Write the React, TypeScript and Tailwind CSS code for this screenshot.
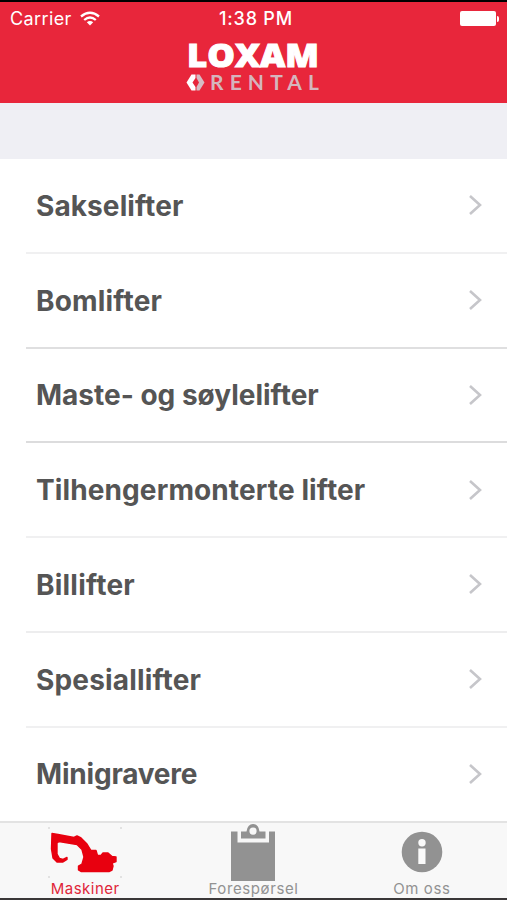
import React, { useState } from "react";

const machines = [
  { name: "Sakselifter", text: "tracking-[0.09px]", line: "border-[#f0f0f1]" },
  { name: "Bomlifter", text: "tracking-[0.18px]", line: "border-[#dfdfe0]" },
  { name: "Maste- og søylelifter", text: "tracking-[0px]", line: "border-[#dcdcdd]" },
  { name: "Tilhengermonterte lifter", text: "tracking-[0.11px]", line: "border-[#f0f0f1]" },
  { name: "Billifter", text: "tracking-[0.22px]", line: "border-[#ededee]" },
  { name: "Spesiallifter", text: "tracking-[0.16px]", line: "border-[#f0f0f1]" },
  { name: "Minigravere", text: "tracking-[-0.2px]", line: "border-transparent" },
];

function Logo() {
  return (
    <svg width="140" height="60" viewBox="0 0 140 60" className="block overflow-visible">
      <text
        x="3"
        y="31"
        textLength="132"
        lengthAdjust="spacingAndGlyphs"
        fill="#fff"
        stroke="#fff"
        strokeWidth="1"
        className="font-['Open_Sans',sans-serif] text-[31px] leading-none font-extrabold"
      >
        LOXAM
      </text>
      <path d="M7.500 38.500 H11.500 V42 L8.500 46.500 L11.500 51 V54.500 H7.500 L2.500 46.500 Z" fill="#fff" />
      <path d="M12.500 38.500 H15.500 L20.500 46.500 L15.500 54.500 H12.500 V51 L15 46.500 L12.500 42 Z" fill="#d6bcc3" />
      <text
        x="26"
        y="54"
        textLength="109"
        fill="#d5b5bd"
        className="font-['Lato',sans-serif] text-[21px] leading-none font-bold"
      >
        RENTAL
      </text>
    </svg>
  );
}

function WifiIcon() {
  return (
    <svg width="20" height="16" viewBox="0 0 20 16" fill="none" stroke="#fff" strokeWidth="2.300">
      <path d="M1 5.500 Q10 -2 19 5.500" />
      <path d="M4.200 9 Q10 4 15.800 9" />
      <path d="M6.800 11.300 Q10 8.600 13.200 11.300 L10 14.500 Z" fill="#fff" stroke="none" />
    </svg>
  );
}

function ExcavatorIcon() {
  return (
    <svg width="78" height="52" viewBox="0 0 78 52" className="block">
      <path
        fill="#e8000f"
        stroke="#e8000f"
        strokeWidth="1.400"
        strokeLinejoin="round"
        d="M6 6.500 L12 7.500 L28 10.500 L31 9 L35 11 L41 17 L45 23.500 L50 23.500 L51.500 28.500 L55 28.500 L57 26 L62 26 L66 29.500 L70 30 L70 34.500 L66 36 L67 39 L66 43 L63 44.500 L35 44.500 L32.500 43 L32.500 39 L36 37 L38 30 L36 22.500 L31 17.500 L13 14.500 L11 16 L11 27 L13.500 31.500 L17 32.500 L21 30.500 L21 32.500 L17 35 L11 35 L7 31 L5.500 22 Z"
      />
      <path d="M2 1h2M76 1h-2M2 50h2M76 50h-2" stroke="#ccc" strokeWidth="1" />
    </svg>
  );
}

function ClipboardIcon() {
  return (
    <svg width="46" height="57" viewBox="0 0 46 57" className="block">
      <path d="M1 7.500 H45 V57 H1 Z" fill="#929292" />
      <path d="M7.500 6 H39 V18.500 H7.500 Z" fill="#f7f7f7" />
      <path
        fillRule="evenodd"
        fill="#929292"
        d="M11 7.500 H16.500 Q17.500 0 23 0 Q28.500 0 29.500 7.500 H35.500 V14.500 H11 Z M23 3.500 A3.600 3.600 0 1 0 23 10.700 A3.600 3.600 0 1 0 23 3.500 Z"
      />
    </svg>
  );
}

function InfoIcon() {
  return (
    <svg width="42" height="42" viewBox="0 0 42 42" className="block">
      <circle cx="21" cy="21" r="20.300" fill="#929292" />
      <circle cx="21" cy="11.800" r="3.700" fill="#fafafa" />
      <path d="M17.300 17.500 H24.500 V33 H17.300 Z" fill="#fafafa" />
    </svg>
  );
}

const tabs = [
  { name: "Maskiner", icon: <ExcavatorIcon />, pad: "pt-[4px]" },
  { name: "Forespørsel", icon: <ClipboardIcon />, pad: "pt-[1px]" },
  { name: "Om oss", icon: <InfoIcon />, pad: "pt-[8px]" },
];

export default function App() {
  const [activeTab, setActiveTab] = useState("Maskiner");

  return (
    <div className="flex h-[900px] w-[507px] flex-col overflow-hidden border-t-2 border-black bg-white font-['Inter',sans-serif]">
      <header className="h-[100.500px] shrink-0 bg-[#e8263b] text-white">
        <div className="grid h-[33px] grid-cols-3 items-center pr-[8px] pl-[10px]">
          <div className="flex items-center gap-[8px]">
            <span className="text-[18px] tracking-[0.4px]">Carrier</span>
            <WifiIcon />
          </div>
          <span className="pl-[3px] text-center text-[18px] font-medium tracking-[0.8px]">1:38 PM</span>
          <div className="flex items-center justify-end gap-px">
            <div className="h-[15px] w-[36px] rounded-[2px] bg-white" />
            <div className="h-[6px] w-[2px] rounded-r-full bg-white" />
          </div>
        </div>
        <div className="flex justify-center pt-px">
          <Logo />
        </div>
      </header>

      <div className="h-[56.500px] shrink-0 bg-[#efeff4]" />

      <main className="flex min-h-0 flex-1 flex-col overflow-hidden">
        {machines.map((machine) => (
          <div
            key={machine.name}
            className={`ml-[26px] flex h-[94.750px] shrink-0 items-center justify-between border-b-2 pr-[25px] pl-[10px] ${machine.line}`}
          >
            <span className={`pt-px text-[28px] font-bold text-[#555] ${machine.text}`}>
              {machine.name}
            </span>
            <svg width="14" height="22" viewBox="0 0 14 22" fill="none">
              <path d="M2 2 L12 11 L2 20" stroke="#c6c6ca" strokeWidth="2.600" />
            </svg>
          </div>
        ))}
      </main>

      <nav className="grid h-[79px] shrink-0 grid-cols-3 border-t-2 border-b-2 border-t-[#e3e3e3] border-b-[#3a3738] bg-[#f8f8f8] pr-px pl-px">
        {tabs.map((tab) => (
          <button
            key={tab.name}
            onClick={() => setActiveTab(tab.name)}
            className="flex flex-col items-center"
          >
            <span className={`h-[57px] ${tab.pad}`}>{tab.icon}</span>
            <span
              className={
                activeTab === tab.name
                  ? "text-[15px] leading-[18px] tracking-[0.5px] text-[#e02639]"
                  : "text-[15px] leading-[18px] tracking-[0.6px] text-[#929292]"
              }
            >
              {tab.name}
            </span>
          </button>
        ))}
      </nav>
    </div>
  );
}
